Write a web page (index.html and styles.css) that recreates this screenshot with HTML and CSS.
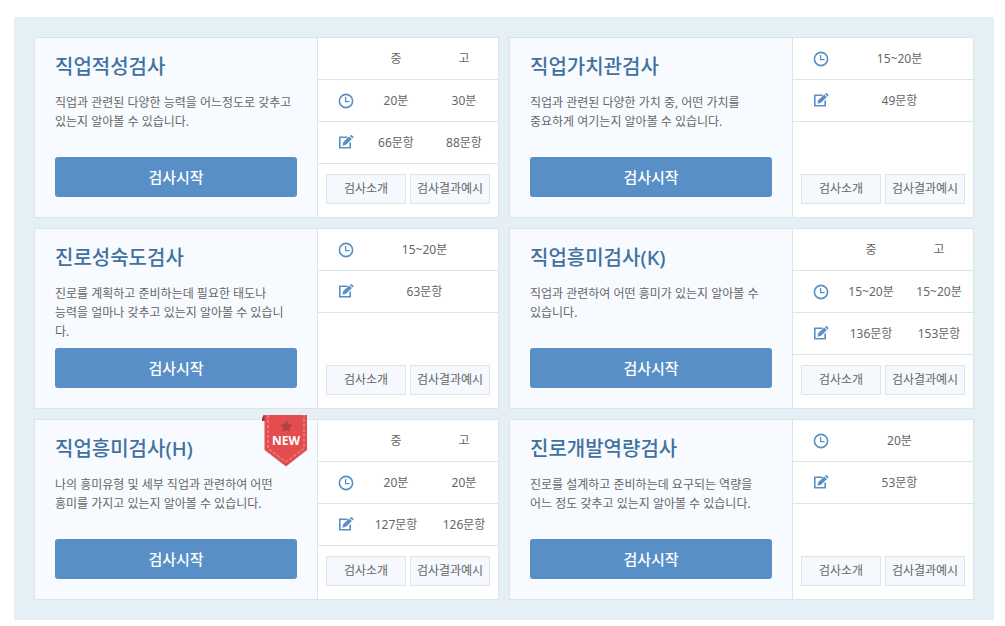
FILE: index.html
```html
<!DOCTYPE html>
<html lang="ko">
<head>
<meta charset="utf-8">
<meta name="viewport" content="width=device-width, initial-scale=1">
<title>직업심리검사</title>
<link rel="stylesheet" href="styles.css">
</head>
<body>
<svg class="sprite" aria-hidden="true">
  <symbol id="clock" viewBox="0 0 16 16">
    <circle cx="8" cy="8" r="6.6" fill="none" stroke="currentColor" stroke-width="1.6"/>
    <path d="M7.6 4v4.7h4" fill="none" stroke="currentColor" stroke-width="1.3"/>
  </symbol>
  <symbol id="edit" viewBox="0 0 16 16">
    <path d="M9.5 2.300H1.800v10.400h10.400V7.600" fill="none" stroke="currentColor" stroke-width="1.6"/>
    <path d="M4.400 10.700l.9-3.600 5.900-5.700 2.700 2.700-5.900 5.700z" fill="currentColor"/>
    <path d="M12 .9l.7-.6q.6-.5 1.200 0l1.300 1.300q.5.6 0 1.200l-.7.6z" fill="currentColor"/>
  </symbol>
</svg>
<main class="panel">
  <article class="card">
    <div class="summary">
      <h2 class="title">직업적성검사</h2>
      <p class="desc">직업과 관련된 다양한 능력을 어느정도로 갖추고<br>있는지 알아볼 수 있습니다.</p>
      <button class="start" type="button">검사시작</button>
    </div>
    <div class="info">
      <table class="spec">
        <tr><td class="icon-cell"></td><th scope="col">중</th><th scope="col">고</th></tr>
        <tr><th class="icon-cell" scope="row"><svg class="icon" role="img" aria-label="소요시간"><use href="#clock"/></svg></th><td>20분</td><td>30분</td></tr>
        <tr><th class="icon-cell" scope="row"><svg class="icon" role="img" aria-label="문항수"><use href="#edit"/></svg></th><td>66문항</td><td>88문항</td></tr>
      </table>
      <div class="links"><button class="more" type="button">검사소개</button><button class="more" type="button">검사결과예시</button></div>
    </div>
  </article>

  <article class="card">
    <div class="summary">
      <h2 class="title">직업가치관검사</h2>
      <p class="desc">직업과 관련된 다양한 가치 중, 어떤 가치를<br>중요하게 여기는지 알아볼 수 있습니다.</p>
      <button class="start" type="button">검사시작</button>
    </div>
    <div class="info">
      <table class="spec spec-single">
        <tr><th class="icon-cell" scope="row"><svg class="icon" role="img" aria-label="소요시간"><use href="#clock"/></svg></th><td>15~20분</td></tr>
        <tr><th class="icon-cell" scope="row"><svg class="icon" role="img" aria-label="문항수"><use href="#edit"/></svg></th><td>49문항</td></tr>
      </table>
      <div class="links"><button class="more" type="button">검사소개</button><button class="more" type="button">검사결과예시</button></div>
    </div>
  </article>

  <article class="card">
    <div class="summary">
      <h2 class="title">진로성숙도검사</h2>
      <p class="desc">진로를 계획하고 준비하는데 필요한 태도나<br>능력을 얼마나 갖추고 있는지 알아볼 수 있습니<br>다.</p>
      <button class="start" type="button">검사시작</button>
    </div>
    <div class="info">
      <table class="spec spec-single">
        <tr><th class="icon-cell" scope="row"><svg class="icon" role="img" aria-label="소요시간"><use href="#clock"/></svg></th><td>15~20분</td></tr>
        <tr><th class="icon-cell" scope="row"><svg class="icon" role="img" aria-label="문항수"><use href="#edit"/></svg></th><td>63문항</td></tr>
      </table>
      <div class="links"><button class="more" type="button">검사소개</button><button class="more" type="button">검사결과예시</button></div>
    </div>
  </article>

  <article class="card">
    <div class="summary">
      <h2 class="title">직업흥미검사(K)</h2>
      <p class="desc">직업과 관련하여 어떤 흥미가 있는지 알아볼 수<br>있습니다.</p>
      <button class="start" type="button">검사시작</button>
    </div>
    <div class="info">
      <table class="spec">
        <tr><td class="icon-cell"></td><th scope="col">중</th><th scope="col">고</th></tr>
        <tr><th class="icon-cell" scope="row"><svg class="icon" role="img" aria-label="소요시간"><use href="#clock"/></svg></th><td>15~20분</td><td>15~20분</td></tr>
        <tr><th class="icon-cell" scope="row"><svg class="icon" role="img" aria-label="문항수"><use href="#edit"/></svg></th><td>136문항</td><td>153문항</td></tr>
      </table>
      <div class="links"><button class="more" type="button">검사소개</button><button class="more" type="button">검사결과예시</button></div>
    </div>
  </article>

  <article class="card">
    <div class="summary">
      <h2 class="title">직업흥미검사(H)</h2>
      <p class="desc">나의 흥미유형 및 세부 직업과 관련하여 어떤<br>흥미를 가지고 있는지 알아볼 수 있습니다.</p>
      <button class="start" type="button">검사시작</button>
      <svg class="ribbon" viewBox="0 0 46 52" role="img" aria-label="NEW">
        <path d="M1.500 0H4v6H0V3.500z" fill="#a82f31"/>
        <path d="M2.500 0H45v35L24 51.500 2.500 35z" fill="#e44d50"/>
        <path d="M6 0v33.500l18 13.300L42 33.500V0" fill="none" stroke="#f0a0a1" stroke-width="1" stroke-dasharray="3 2"/>
        <path d="M24.300 5.200l1.900 3.900 4.300.6-3.100 3 .7 4.300-3.800-2-3.800 2 .7-4.300-3.100-3 4.300-.6z" fill="#b04042"/>
        <text class="ribbon-text" x="24" y="30" text-anchor="middle">NEW</text>
      </svg>
    </div>
    <div class="info">
      <table class="spec">
        <tr><td class="icon-cell"></td><th scope="col">중</th><th scope="col">고</th></tr>
        <tr><th class="icon-cell" scope="row"><svg class="icon" role="img" aria-label="소요시간"><use href="#clock"/></svg></th><td>20분</td><td>20분</td></tr>
        <tr><th class="icon-cell" scope="row"><svg class="icon" role="img" aria-label="문항수"><use href="#edit"/></svg></th><td>127문항</td><td>126문항</td></tr>
      </table>
      <div class="links"><button class="more" type="button">검사소개</button><button class="more" type="button">검사결과예시</button></div>
    </div>
  </article>

  <article class="card">
    <div class="summary">
      <h2 class="title">진로개발역량검사</h2>
      <p class="desc">진로를 설계하고 준비하는데 요구되는 역량을<br>어느 정도 갖추고 있는지 알아볼 수 있습니다.</p>
      <button class="start" type="button">검사시작</button>
    </div>
    <div class="info">
      <table class="spec spec-single">
        <tr><th class="icon-cell" scope="row"><svg class="icon" role="img" aria-label="소요시간"><use href="#clock"/></svg></th><td>20분</td></tr>
        <tr><th class="icon-cell" scope="row"><svg class="icon" role="img" aria-label="문항수"><use href="#edit"/></svg></th><td>53문항</td></tr>
      </table>
      <div class="links"><button class="more" type="button">검사소개</button><button class="more" type="button">검사결과예시</button></div>
    </div>
  </article>
</main>
</body>
</html>
```
FILE: styles.css
```css
* {
  box-sizing: border-box;
}

body {
  margin: 0;
  padding: 17px 11px 6px 14px;
  background: #fff;
  color: #666;
  font: 12px/19px "Noto Sans", "Noto Sans CJK KR", sans-serif;
}

button {
  margin: 0;
  padding: 0 0 2px;
  font-family: inherit;
  cursor: pointer;
}

.sprite {
  display: none;
}

.panel {
  display: grid;
  grid-template-columns: repeat(2, minmax(0, 1fr));
  gap: 10px;
  padding: 20px;
  background: #e4f0f5;
}

.card {
  display: grid;
  grid-template-columns: minmax(0, 1fr) 181px;
  border: 1px solid #dde4e8;
  background: #fff;
}

.summary {
  position: relative;
  display: flex;
  flex-direction: column;
  padding: 15px 20px 20px;
  background: #f7fbff;
}

.title {
  margin: 0 0 12px;
  color: #41719f;
  font-size: 20px;
  font-weight: 500;
  line-height: 28px;
}

.desc {
  min-height: 57px;
  margin: 0 0 7px;
}

.start {
  height: 40px;
  margin-top: auto;
  border: 0;
  border-radius: 3px;
  background: #588fc6;
  color: #fff;
  font-size: 15px;
  font-weight: 500;
}

.ribbon {
  position: absolute;
  top: -5px;
  right: 9px;
  width: 46px;
  height: 52px;
}

.ribbon-text {
  fill: #fff;
  font: bold 12px "Open Sans", sans-serif;
}

.info {
  display: flex;
  flex-direction: column;
  border-left: 1px solid #dde4e8;
}

.spec {
  width: 100%;
  table-layout: fixed;
  border-collapse: separate;
  border-spacing: 0;
}

.spec th,
.spec td {
  height: 42px;
  padding: 0;
  border-bottom: 1px solid #dde4e8;
  font-weight: 400;
  text-align: center;
}

.spec .icon-cell {
  width: 44px;
  padding-left: 20px;
  text-align: left;
}

.spec-single .icon-cell {
  width: 36px;
}

.spec-single td {
  padding-right: 3px;
}

.icon {
  display: block;
  width: 16px;
  height: 16px;
  color: #588fc6;
}

.links {
  display: grid;
  grid-template-columns: 1fr 1fr;
  gap: 4px;
  margin-top: auto;
  padding: 0 8px 13px;
}

.more {
  height: 30px;
  border: 1px solid #dde4e8;
  background: #f5f9fd;
  color: #666;
  font-size: 12px;
}
```
